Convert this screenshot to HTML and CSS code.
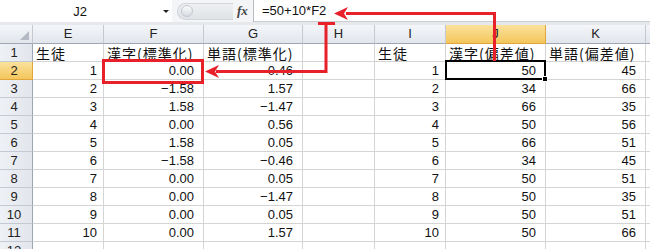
FILE: index.html
```html
<!DOCTYPE html>
<html lang="ja">
<head>
    <meta charset="UTF-8">
    <title>偏差値</title>
    <link rel="stylesheet" href="styles.css">
</head>
<body>
    <!-- Formula bar -->
    <div class="formula-bar">
        <div class="name-box">
            <span class="name">J2</span>
            <span class="drop"></span>
        </div>
        <div class="fx-area">
            <span class="grip"><span class="knob"></span></span>
            <span class="fx">fx</span>
        </div>
        <div class="formula">=50+10*F2</div>
    </div>

    <!-- Sheet -->
    <div class="sheet">
        <div class="hd corner"><span class="tri"></span></div>
        <div class="hd">E</div>
        <div class="hd">F</div>
        <div class="hd">G</div>
        <div class="hd">H</div>
        <div class="hd">I</div>
        <div class="hd sel">J</div>
        <div class="hd">K</div>
        <div class="hd"></div>

        <div class="rh">1</div>
        <div class="c jp">生徒</div>
        <div class="c jp">漢字(標準化)</div>
        <div class="c jp">単語(標準化)</div>
        <div class="c"></div>
        <div class="c jp">生徒</div>
        <div class="c jp">漢字(偏差値)</div>
        <div class="c jp">単語(偏差値)</div>
        <div class="c"></div>

        <div class="rh sel">2</div>
        <div class="c n id">1</div><div class="c n">0.00</div><div class="c n">0.46</div><div class="c"></div>
        <div class="c n id">1</div><div class="c n active">50</div><div class="c n">45</div><div class="c"></div>

        <div class="rh">3</div>
        <div class="c n id">2</div><div class="c n">−1.58</div><div class="c n">1.57</div><div class="c"></div>
        <div class="c n id">2</div><div class="c n">34</div><div class="c n">66</div><div class="c"></div>

        <div class="rh">4</div>
        <div class="c n id">3</div><div class="c n">1.58</div><div class="c n">−1.47</div><div class="c"></div>
        <div class="c n id">3</div><div class="c n">66</div><div class="c n">35</div><div class="c"></div>

        <div class="rh">5</div>
        <div class="c n id">4</div><div class="c n">0.00</div><div class="c n">0.56</div><div class="c"></div>
        <div class="c n id">4</div><div class="c n">50</div><div class="c n">56</div><div class="c"></div>

        <div class="rh">6</div>
        <div class="c n id">5</div><div class="c n">1.58</div><div class="c n">0.05</div><div class="c"></div>
        <div class="c n id">5</div><div class="c n">66</div><div class="c n">51</div><div class="c"></div>

        <div class="rh">7</div>
        <div class="c n id">6</div><div class="c n">−1.58</div><div class="c n">−0.46</div><div class="c"></div>
        <div class="c n id">6</div><div class="c n">34</div><div class="c n">45</div><div class="c"></div>

        <div class="rh">8</div>
        <div class="c n id">7</div><div class="c n">0.00</div><div class="c n">0.05</div><div class="c"></div>
        <div class="c n id">7</div><div class="c n">50</div><div class="c n">51</div><div class="c"></div>

        <div class="rh">9</div>
        <div class="c n id">8</div><div class="c n">0.00</div><div class="c n">−1.47</div><div class="c"></div>
        <div class="c n id">8</div><div class="c n">50</div><div class="c n">35</div><div class="c"></div>

        <div class="rh">10</div>
        <div class="c n id">9</div><div class="c n">0.00</div><div class="c n">0.05</div><div class="c"></div>
        <div class="c n id">9</div><div class="c n">50</div><div class="c n">51</div><div class="c"></div>

        <div class="rh">11</div>
        <div class="c n id">10</div><div class="c n">0.00</div><div class="c n">1.57</div><div class="c"></div>
        <div class="c n id">10</div><div class="c n">50</div><div class="c n">66</div><div class="c"></div>

        <div class="rh">12</div>
        <div class="c"></div><div class="c"></div><div class="c"></div><div class="c"></div>
        <div class="c"></div><div class="c"></div><div class="c"></div><div class="c"></div>
    </div>

    <!-- Red annotation arrows drawn over the sheet -->
    <svg class="marks" width="650" height="249" viewBox="0 0 650 249">
        <g fill="none" stroke="#e8202a" stroke-width="3">
            <rect x="103.5" y="60.5" width="99" height="22"/>
            <polyline points="216,71.5 326,71.5 326,23.5"/>
            <line x1="318" y1="23.5" x2="335" y2="23.5"/>
            <polyline points="346,13.5 494.5,13.5 494.5,61"/>
        </g>
        <g fill="#e8202a">
            <polygon points="205,71.5 219,65 215,71.5 219,78"/>
            <polygon points="334,13.5 348,7 344,13.5 348,20"/>
        </g>
    </svg>
</body>
</html>
```

FILE: styles.css
```css
/* Global */
body {
    margin: 0;
    width: 650px;
    height: 249px;
    overflow: hidden;
    position: relative;
    background: #fff;
    font-family: 'Liberation Sans', 'Noto Sans CJK JP', sans-serif;
    font-size: 13px;
    color: #111;
}

/* Formula bar */
.formula-bar {
    display: flex;
    height: 22px;
    border-bottom: 3px solid #e6e8eb;
    box-shadow: inset 0 -1px 0 #c9ccd1;
    box-sizing: content-box;
}

.name-box {
    width: 172px;
    display: flex;
    align-items: center;
    background: #fff;
}

.name {
    width: 160px;
    text-align: center;
}

.drop {
    width: 0;
    height: 0;
    margin-left: 3px;
    border-left: 3px solid transparent;
    border-right: 3px solid transparent;
    border-top: 3px solid #222;
}

.fx-area {
    width: 81px;
    display: flex;
    align-items: center;
    padding-left: 5px;
    box-sizing: border-box;
    background: #f4f5f6;
}

.grip {
    width: 56px;
    height: 17px;
    border-radius: 9px 0 0 9px;
    background: linear-gradient(to bottom, #eef0f2, #dfe2e6);
    border: 1px solid #d2d5da;
    border-right: none;
    display: flex;
    align-items: center;
    padding-left: 3px;
    box-sizing: border-box;
}

.knob {
    width: 10px;
    height: 10px;
    border-radius: 50%;
    background: linear-gradient(to bottom, #fafbfc, #d8dce1);
    border: 1px solid #c4c8ce;
}

.fx {
    margin-left: 4px;
    font-family: 'Liberation Serif', serif;
    font-style: italic;
    font-weight: bold;
    font-size: 13px;
    color: #444;
}

.formula {
    flex: 1;
    border-left: 1px solid #b8bcc2;
    padding-left: 8px;
    line-height: 22px;
    font-size: 13px;
}

/* Sheet grid */
.sheet {
    display: grid;
    grid-template-columns: 33px 71px 100px 99px 72px 71px 100px 100px 1fr;
    grid-template-rows: 19px;
    grid-auto-rows: 18px;
}

.sheet > div {
    box-sizing: border-box;
    border-right: 1px solid #d4d4d4;
    border-bottom: 1px solid #d4d4d4;
    white-space: nowrap;
    overflow: visible;
    line-height: 17px;
}

.hd {
    background: linear-gradient(to bottom, #f4f6f9, #e2e6ec);
    border-right-color: #c5cad2 !important;
    border-bottom-color: #9ea7b3 !important;
    text-align: center;
    line-height: 18px !important;
    color: #222;
}

.corner {
    position: relative;
}

.corner .tri {
    position: absolute;
    right: 3px;
    bottom: 3px;
    width: 0;
    height: 0;
    border-left: 9px solid transparent;
    border-bottom: 9px solid #b4bac3;
}

.rh {
    background: linear-gradient(to right, #eef1f5, #e2e6ec);
    border-right-color: #9ea7b3 !important;
    border-bottom-color: #c5cad2 !important;
    text-align: center;
    padding-right: 4px;
    color: #222;
}

.hd.sel,
.rh.sel {
    background: linear-gradient(to bottom, #fbe29d, #f3c65c);
    border-right-color: #e0a63a !important;
    border-bottom-color: #e0a63a !important;
}

.c {
    padding: 0 9px 0 3px;
}

.c.n {
    text-align: right;
}

.c.id {
    padding-right: 6px;
}

.c.jp {
    font-family: 'Noto Sans CJK JP', sans-serif;
    font-size: 14px;
    letter-spacing: 1px;
    line-height: 18px;
}

.c.active {
    position: relative;
}

.c.active::after {
    content: "";
    position: absolute;
    left: -1px;
    top: -2px;
    right: -1px;
    bottom: -1px;
    border: 2px solid #000;
}

.c.active::before {
    content: "";
    position: absolute;
    right: -3px;
    bottom: -3px;
    width: 4px;
    height: 4px;
    background: #000;
    border: 1px solid #fff;
    z-index: 1;
}

/* Annotation overlay */
.marks {
    position: absolute;
    left: 0;
    top: 0;
    pointer-events: none;
}
```
